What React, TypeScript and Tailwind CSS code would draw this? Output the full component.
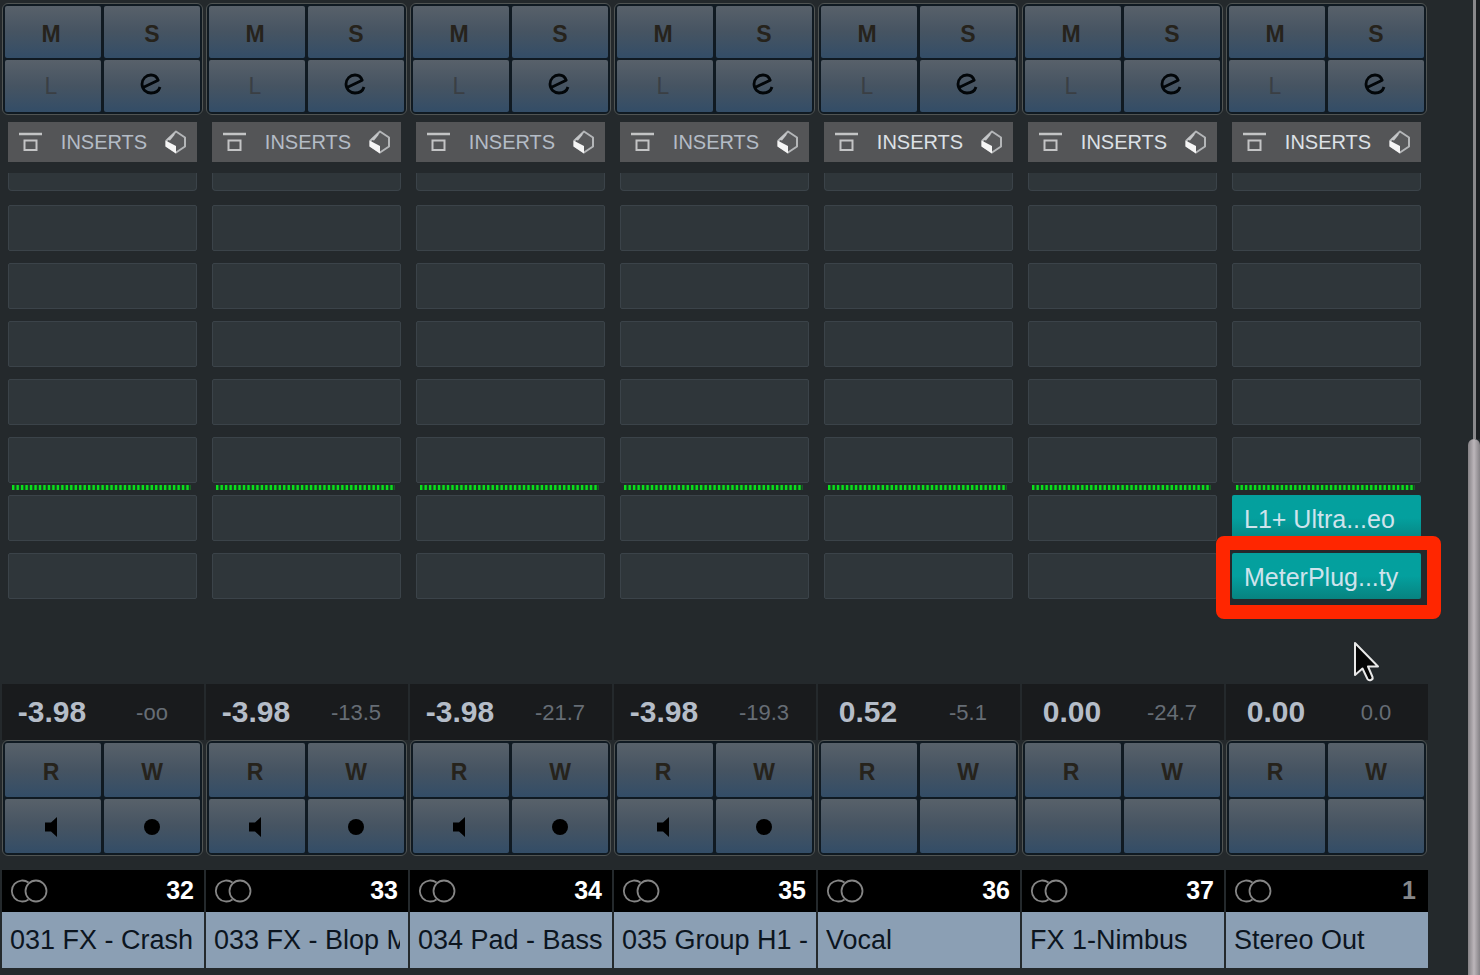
import React from "react";
import clsx from "clsx";

type Channel = {
  name: string;
  number: string;
  level: string;
  peak: string;
  monitor: boolean;
  bright?: boolean;
  output?: boolean;
  inserts: string[];
};

const channels: Channel[] = [
  { name: "031 FX - Crash", number: "32", level: "-3.98", peak: "-oo", monitor: true, inserts: [] },
  { name: "033 FX - Blop M", number: "33", level: "-3.98", peak: "-13.5", monitor: true, inserts: [] },
  { name: "034 Pad - Bass", number: "34", level: "-3.98", peak: "-21.7", monitor: true, inserts: [] },
  { name: "035 Group H1 -", number: "35", level: "-3.98", peak: "-19.3", monitor: true, inserts: [] },
  { name: "Vocal", number: "36", level: "0.52", peak: "-5.1", monitor: false, bright: true, inserts: [] },
  { name: "FX 1-Nimbus", number: "37", level: "0.00", peak: "-24.7", monitor: false, bright: true, inserts: [] },
  {
    name: "Stereo Out",
    number: "1",
    level: "0.00",
    peak: "0.0",
    monitor: false,
    bright: true,
    output: true,
    inserts: ["L1+ Ultra...eo", "MeterPlug...ty"],
  },
];

export default function App() {
  return (
    <main className="flex min-h-screen bg-[#24292c] font-['Liberation_Sans',Arial,sans-serif]">
      <div className="grid flex-1 grid-cols-7 gap-0.5 pt-[3px] pl-0.5">
        {channels.map((channel) => (
          <ChannelStrip key={channel.number} channel={channel} />
        ))}
      </div>
      <Scrollbar />
    </main>
  );
}

const ChannelStrip: React.FC<{ channel: Channel }> = ({ channel }) => {
  return (
    <section className="flex min-w-0 flex-col" aria-label={channel.name}>
      <ButtonBlock>
        <StripButton label="Mute" className="h-[52px] pt-1 font-bold text-[#26231c]">
          M
        </StripButton>
        <StripButton label="Solo" className="h-[52px] pt-1 font-bold text-[#26231c]">
          S
        </StripButton>
        <StripButton label="Listen" className="h-[52px] text-[#3a3f44]">
          L
        </StripButton>
        <StripButton label="Edit channel" className="h-[52px] pr-0.5 pb-1">
          <EditIcon />
        </StripButton>
      </ButtonBlock>

      <div className="mt-[7px] mr-[7px] ml-1.5 flex flex-col">
        <header
          className={clsx(
            "flex h-10 items-center justify-between bg-[#545557] pr-2.5 pl-[11px] text-xl",
            channel.bright ? "text-[#dde1e6]" : "text-[#b4bcc6]",
          )}
        >
          <BypassIcon />
          <h2>INSERTS</h2>
          <CubeIcon />
        </header>

        <div className="mt-[11px] h-[18px] rounded-b-sm border border-t-0 border-[#3b4349] bg-[#2f363a]" />
        <div className="mt-3.5 flex flex-col gap-3">
          <InsertSlot />
          <InsertSlot />
          <InsertSlot />
          <InsertSlot />
          <InsertSlot />
        </div>
        <div className="flex h-3 pt-0.5 pr-1.5 pl-1">
          <FaderDivider />
        </div>
        <div className="flex flex-col gap-3">
          <InsertSlot plugin={channel.inserts[0]} />
          <InsertSlot plugin={channel.inserts[1]} highlighted={channel.output} />
        </div>
      </div>

      <div className="mt-[85px] grid h-14 grid-cols-2 items-center bg-[#191b1d] pr-0.5 text-center">
        <span className="text-3xl font-bold text-[#b5bdc8]">{channel.level}</span>
        <span className="text-[22px] text-[#666d75]">{channel.peak}</span>
      </div>

      <ButtonBlock>
        <StripButton label="Read automation" className="h-[54px] pt-1 font-bold text-[#26231c]">
          R
        </StripButton>
        <StripButton label="Write automation" className="h-[54px] pt-1 font-bold text-[#26231c]">
          W
        </StripButton>
        <StripButton label="Monitor" className="h-[54px] pt-0.5">
          {channel.monitor && <SpeakerIcon />}
        </StripButton>
        <StripButton label="Record enable" className="h-[54px] pt-0.5">
          {channel.monitor && <span className="size-4 rounded-full bg-black" />}
        </StripButton>
      </ButtonBlock>

      <div className="mt-3.5 flex h-[42px] items-center justify-between bg-black pr-2.5 pl-2">
        <StereoIcon />
        <span
          className={clsx(
            "text-[25px] font-bold",
            channel.output ? "pr-0.5 text-[#85878a]" : "text-white",
          )}
        >
          {channel.number}
        </span>
      </div>
      <div className="flex h-14 items-center bg-[#8b9fb4] px-2">
        <p className="overflow-hidden text-[27px] whitespace-nowrap text-[#0c151f]">
          {channel.name}
        </p>
      </div>
    </section>
  );
};

const ButtonBlock: React.FC<{ children: React.ReactNode }> = ({ children }) => (
  <div className="mr-px grid grid-cols-2 gap-x-[3px] gap-y-0.5 overflow-hidden rounded-md border border-[#505453] bg-[#101a22] p-0.5">
    {children}
  </div>
);

const StripButton: React.FC<{
  label: string;
  className?: string;
  children?: React.ReactNode;
}> = ({ label, className, children }) => (
  <button
    type="button"
    aria-label={label}
    className={clsx(
      "flex items-center justify-center rounded-xs bg-linear-to-b from-[#58616a] via-[#465462] to-[#334d67] text-[23px] odd:pr-1",
      className,
    )}
  >
    {children}
  </button>
);

const InsertSlot: React.FC<{ plugin?: string; highlighted?: boolean }> = ({
  plugin,
  highlighted,
}) => {
  return (
    <div className="relative">
      <button
        type="button"
        aria-label={plugin ?? "Empty insert"}
        className={clsx(
          "flex h-[46px] w-full items-center rounded-xs px-3 text-[25px] whitespace-nowrap",
          plugin
            ? "bg-linear-to-b from-[#04a09e] via-[#04a09e] to-[#078380] pt-1 text-[#cfe3ec]"
            : "border border-[#3b4349] bg-[#2f363a]",
        )}
      >
        {plugin}
      </button>
      {highlighted && (
        <>
          <div className="pointer-events-none absolute -top-[17px] -right-5 -bottom-5 -left-4 z-10 rounded-lg border-[14px] border-[#ff2600]" />
          <Cursor />
        </>
      )}
    </div>
  );
};

// Row of green ticks that separates pre and post fader inserts
const FaderDivider = () => (
  <svg className="h-[5px] w-full" aria-hidden="true">
    <line x1="0" y1="2.5" x2="100%" y2="2.5" stroke="#07801a" strokeWidth="5" strokeOpacity="0.25" />
    <line x1="0" y1="2.5" x2="100%" y2="2.5" stroke="#0be01c" strokeWidth="5" strokeDasharray="2.4 2.07" />
  </svg>
);

const EditIcon = () => (
  <svg width="22" height="22" viewBox="0 0 22 22" fill="none" stroke="#020609" strokeWidth="2.8">
    <path
      d="M3 14.5 L18.2 7.2 C17 3.8 14.2 2 11 2 C6 2 2 6 2 11 C2 16.2 6 20 11 20 C15.500 20 18.800 18 20 14"
      strokeLinejoin="round"
    />
  </svg>
);

const BypassIcon = () => (
  <svg width="24" height="20" viewBox="0 0 24 20" fill="none" stroke="#c3c4c5">
    <path d="M0 2h23" strokeWidth="2.500" />
    <path d="M5.500 8.500h12v9.500h-12z" strokeWidth="2" />
  </svg>
);

const CubeIcon = () => (
  <svg width="22" height="24" viewBox="0 0 22 24" strokeLinejoin="round">
    <path d="M11 1.500 L20 7.500 V16.500 L11 22.500 L1.500 16 V10.500 Z" fill="#58595b" stroke="#b4b6b8" strokeWidth="2" />
    <path d="M0.500 10.500 L11 16 V23.500 L0.500 16.500 Z" fill="#f5f5f5" />
    <path d="M1.500 9.500 L9.500 2.500 V5 L5 10.500 Z" fill="#c4c6c8" />
  </svg>
);

const SpeakerIcon = () => (
  <svg width="13" height="20" viewBox="0 0 13 20" fill="#000">
    <path d="M0 5.500h6L12 0v20l-6-5.500H0z" />
  </svg>
);

const StereoIcon = () => (
  <svg width="38" height="24" viewBox="0 0 38 24" fill="none" stroke="#858585" strokeWidth="1.800">
    <path d="M18.500 3.500 A10.500 10.500 0 1 0 18.500 20.500" />
    <circle cx="26" cy="12" r="10.500" />
  </svg>
);

const Cursor = () => (
  <svg
    className="pointer-events-none absolute top-[88px] left-[121px] z-10"
    width="28"
    height="42"
    viewBox="0 0 28 42"
    aria-hidden="true"
  >
    <path
      d="M2 2v32l7.500-6.500 5 10.500c1.500 2.500 6 1 5-2l-4.500-10.500h10z"
      fill="#050505"
      stroke="#e8e8e8"
      strokeWidth="2"
      strokeLinejoin="round"
    />
  </svg>
);

const Scrollbar = () => (
  <div className="flex w-[52px] flex-col items-end" aria-hidden="true">
    <div className="flex h-[439px] w-[7px] bg-[#1c1f22]">
      <div className="w-[3px] bg-[#89888b]" />
    </div>
    <div className="w-3 flex-1 rounded-t-md bg-linear-to-r from-[#858286] via-[#bcb6ba] to-[#858286]" />
  </div>
);
